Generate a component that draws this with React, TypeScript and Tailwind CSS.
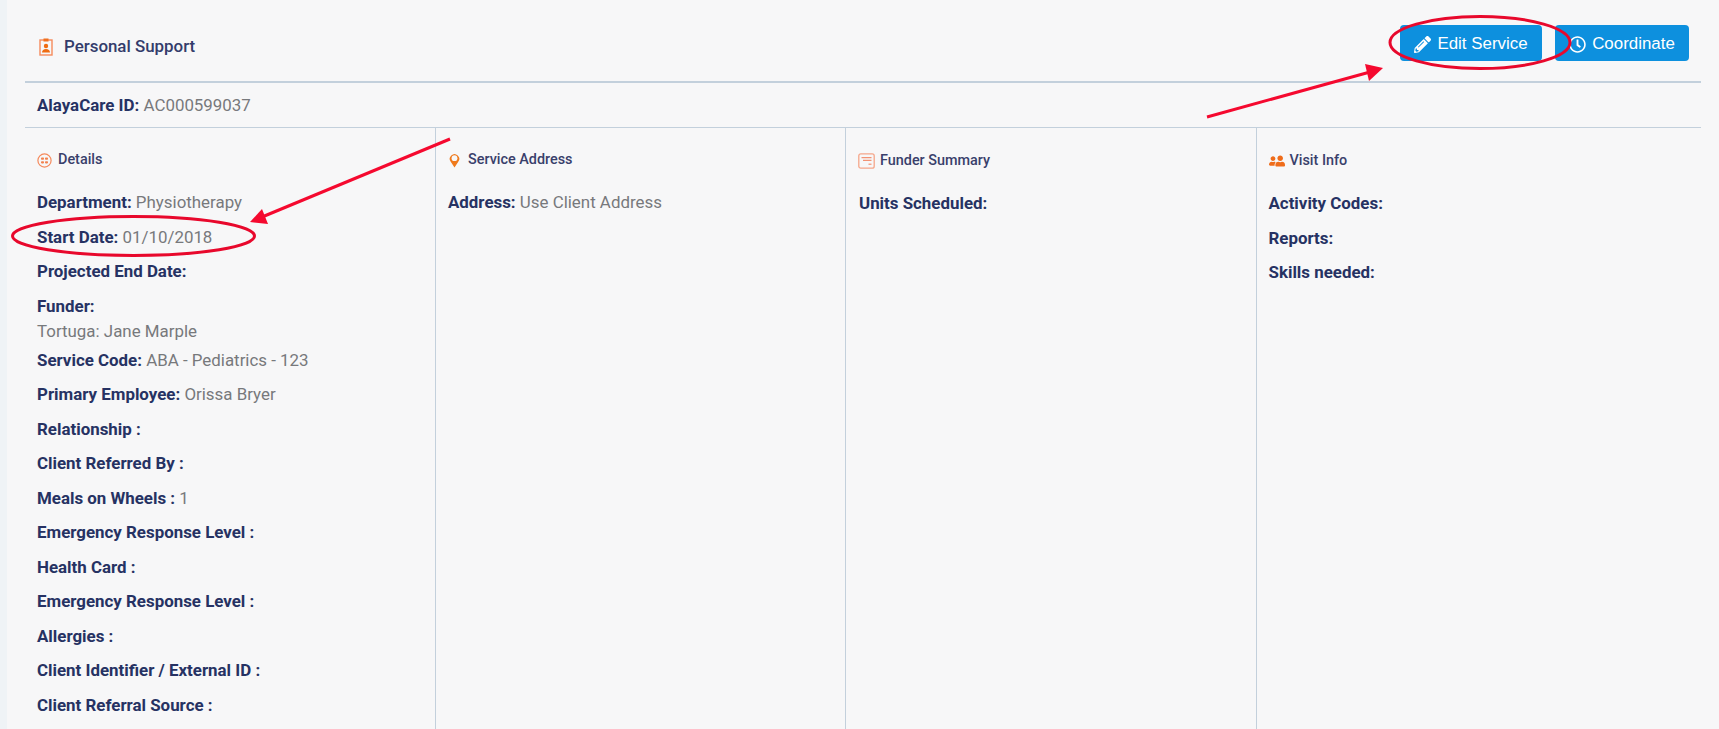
import { FaPencilAlt, FaRegClock, FaUserFriends } from 'react-icons/fa';

const detailRows = [
  { label: 'Department:', value: 'Physiotherapy' },
  { label: 'Start Date:', value: '01/10/2018' },
  { label: 'Projected End Date:' },
];

const moreRows = [
  { label: 'Service Code:', value: 'ABA - Pediatrics - 123' },
  { label: 'Primary Employee:', value: 'Orissa Bryer' },
  { label: 'Relationship :' },
  { label: 'Client Referred By :' },
  { label: 'Meals on Wheels :', value: '1' },
  { label: 'Emergency Response Level :' },
  { label: 'Health Card :' },
  { label: 'Emergency Response Level :' },
  { label: 'Allergies :' },
  { label: 'Client Identifier / External ID :' },
  { label: 'Client Referral Source :' },
];

function Row({ label, value }: { label: string; value?: string }) {
  return (
    <div className="h-[34.5px] leading-[34.5px] whitespace-nowrap">
      <span className="font-bold text-[#263263]">{label}</span>
      {value && <span className="text-[#77797c]"> {value}</span>}
    </div>
  );
}

function ColumnTitle({ icon, title }: { icon: React.ReactNode; title: string }) {
  return (
    <div className="flex h-[22px] items-center gap-[5px] text-[14.4px] font-medium text-[#39406b]">
      <span className="flex w-[16px] shrink-0 justify-center">{icon}</span>
      {title}
    </div>
  );
}

function BadgeIcon() {
  return (
    <svg width="14" height="18" viewBox="0 0 14 18" fill="none">
      <rect x="1" y="2" width="12" height="15" stroke="#f58a5c" strokeWidth="1.4" />
      <rect x="4.5" y="0.5" width="5" height="3" fill="#f0701f" />
      <circle cx="7" cy="8" r="2.2" fill="#ef6c12" />
      <path d="M3 14.5c0-2.4 1.6-3.6 4-3.6s4 1.2 4 3.6z" fill="#ef6c12" />
    </svg>
  );
}

function DotsIcon() {
  return (
    <svg className="-ml-[2px]" width="15" height="15" viewBox="0 0 15 15" fill="none">
      <circle cx="7.5" cy="7.5" r="6.6" stroke="#f58a5c" strokeWidth="1.2" />
      <rect x="4" y="4.6" width="3" height="2.2" rx="0.8" fill="#f2814e" />
      <rect x="8" y="4.6" width="3" height="2.2" rx="0.8" fill="#f2814e" />
      <rect x="4" y="8.2" width="3" height="2.2" rx="0.8" fill="#f2814e" />
      <rect x="8" y="8.2" width="3" height="2.2" rx="0.8" fill="#f2814e" />
    </svg>
  );
}

function PinIcon() {
  return (
    <svg className="-ml-[2px]" width="11" height="15" viewBox="0 0 11 15" fill="none">
      <path d="M5.5 14.5 1.9 8.9A4.7 4.7 0 1 1 9.1 8.9z" fill="#ef7a1c" />
      <circle cx="5.5" cy="5.2" r="2.9" fill="#f7f7f8" />
    </svg>
  );
}

function SummaryIcon() {
  return (
    <svg className="-ml-[2px] shrink-0" width="17" height="16" viewBox="0 0 17 16" fill="none">
      <rect x="0.8" y="0.8" width="15.4" height="14.4" rx="2" stroke="#f5a68a" strokeWidth="1.3" />
      <path d="M3.5 4.6h10M5 7.4h8.5" stroke="#f29274" strokeWidth="1.2" />
      <path d="M10.5 11.2h3" stroke="#f29274" strokeWidth="1.2" />
    </svg>
  );
}

export default function App() {
  return (
    <div className="relative h-[729px] overflow-hidden bg-[#eff3f6] pl-[7px] font-['Roboto',sans-serif] text-[16.9px]">
      <div className="h-full bg-[#f7f7f8] pl-[18px] pr-[18px]">
        {/* Header */}
        <div className="flex h-[83px] items-center justify-between border-b-2 border-[#c3d0dc] pt-[5px] pl-[14px] pr-[12px]">
          <div className="mt-[8px] flex items-center gap-[10px] text-[16.9px] font-medium text-[#333c6b]">
            <BadgeIcon />
            <span className="ml-[1px]">Personal Support</span>
          </div>
          <div className="flex gap-[13px] font-['Liberation_Sans',sans-serif] text-[16.9px] text-white">
            <button className="flex h-[36px] w-[142px] items-center justify-center gap-[6px] rounded-[4px] bg-[#0d90de] pt-[2px]">
              <FaPencilAlt className="h-[17px] w-[17px]" />
              Edit Service
            </button>
            <button className="flex h-[36px] w-[134px] items-center justify-center gap-[6px] rounded-[4px] bg-[#0d90de] pt-[2px]">
              <FaRegClock className="h-[17px] w-[17px]" />
              Coordinate
            </button>
          </div>
        </div>

        <div className="h-[45px] border-b border-[#c3d0dc] pl-[12px] leading-[44px]">
          <span className="font-bold text-[#263263]">AlayaCare ID:</span>
          <span className="text-[#77797c]"> AC000599037</span>
        </div>

        {/* Columns */}
        <div className="grid h-[610px] grid-cols-[411px_410px_410.5px_1fr]">
          <div className="border-r border-[#c3d0dc] pl-[12px] pt-[21px]">
            <ColumnTitle icon={<DotsIcon />} title="Details" />
            <div className="mt-[14px]">
              {detailRows.map((r) => (
                <Row key={r.label} {...r} />
              ))}
              <div className="h-[25px] leading-[34.5px] font-bold text-[#263263]">Funder:</div>
              <div className="h-[29px] leading-[34px] text-[#77797c]">Tortuga: Jane Marple</div>
              {moreRows.map((r, i) => (
                <Row key={i} {...r} />
              ))}
            </div>
          </div>
          <div className="border-r border-[#c3d0dc] pl-[12px] pt-[21px]">
            <div className="-mr-[1px] ml-[-1px]">
              <ColumnTitle icon={<PinIcon />} title="Service Address" />
            </div>
            <div className="mt-[14px]">
              <Row label="Address:" value="Use Client Address" />
            </div>
          </div>
          <div className="border-r border-[#c3d0dc] pl-[13px] pt-[22px]">
            <ColumnTitle icon={<SummaryIcon />} title="Funder Summary" />
            <div className="mt-[14px]">
              <Row label="Units Scheduled:" />
            </div>
          </div>
          <div className="pl-[12px] pt-[22px]">
            <ColumnTitle icon={<FaUserFriends className="h-[16px] w-[16px] -scale-x-100 text-[#ef6c1a]" />} title="Visit Info" />
            <div className="mt-[14px]">
              <Row label="Activity Codes:" />
              <Row label="Reports:" />
              <Row label="Skills needed:" />
            </div>
          </div>
        </div>
      </div>

      {/* Red annotations on top of the screenshot */}
      <svg className="pointer-events-none absolute left-0 top-0" width="1719" height="729" fill="none">
        <ellipse cx="1480" cy="42.5" rx="90" ry="26" stroke="#e8082c" strokeWidth="3" />
        <ellipse cx="133.5" cy="236" rx="121" ry="19.5" stroke="#e8082c" strokeWidth="3" />
        <path d="M1207 117 1370 72" stroke="#f5092f" strokeWidth="3" />
        <path d="M1383 68 1365 64 1369 81z" fill="#f5092f" />
        <path d="M450 139 262 217" stroke="#f5092f" strokeWidth="3" />
        <path d="M250 222 268 224 262 209z" fill="#f5092f" />
      </svg>
    </div>
  );
}
